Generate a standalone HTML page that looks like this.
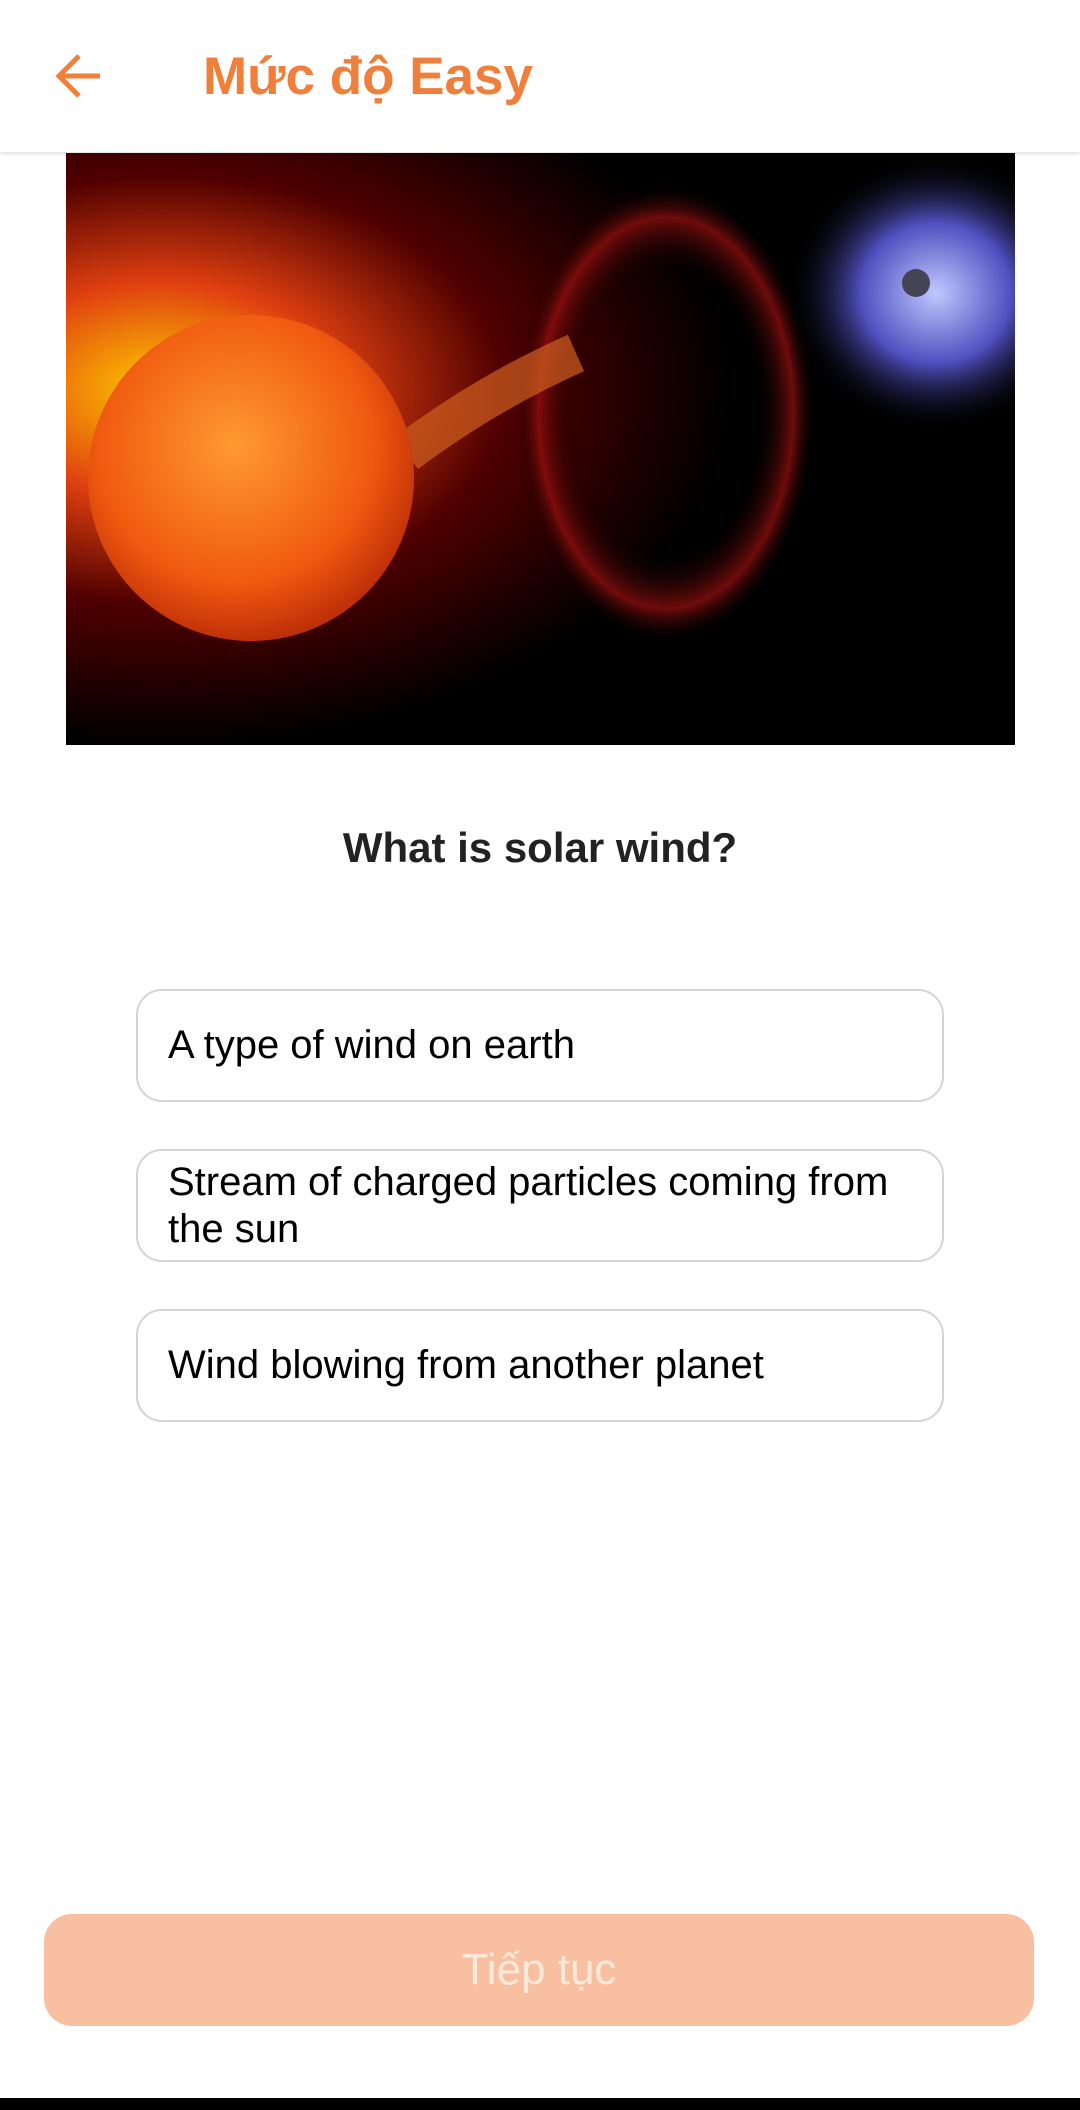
<!DOCTYPE html>
<html><head><meta charset="utf-8"><style>
html,body{margin:0;padding:0;background:#fff;}
body{width:1080px;height:2110px;position:relative;overflow:hidden;font-family:"Liberation Sans",sans-serif;}
.hdr{position:absolute;left:0;top:0;width:1080px;height:152px;background:#fff;box-shadow:0 2px 4px rgba(0,0,0,0.12);z-index:2;}
.title{position:absolute;left:203px;top:46px;font-size:53px;color:#ef7f3a;font-weight:bold;}
.img{position:absolute;left:66px;top:153px;width:949px;height:592px;background:#000;overflow:hidden;}
.q{position:absolute;left:0;width:1080px;top:824px;text-align:center;font-size:42px;font-weight:bold;color:#222;}
.opt{position:absolute;left:136px;width:808px;height:113px;border:2px solid #d4d4d8;border-radius:26px;box-sizing:border-box;font-size:40px;color:#000;padding:0 30px;display:flex;align-items:center;line-height:47px;}
.btn{position:absolute;left:44px;top:1914px;width:990px;height:112px;border-radius:28px;background:#f8c0a0;color:#fde8dc;font-size:44px;text-align:center;line-height:112px;}
.bar{position:absolute;left:0;top:2098px;width:1080px;height:12px;background:#000;}
</style></head><body>
<div class="hdr">
<svg style="position:absolute;left:53px;top:51px" width="50" height="50" viewBox="0 0 50 50"><path d="M47 25H8M26 5L6 25l20 20" fill="none" stroke="#ef7f3a" stroke-width="5"/></svg>
<div class="title">Mức độ Easy</div>
</div>
<div class="img">
<svg width="949" height="592" viewBox="0 0 949 592">
<defs>
<radialGradient id="glow" cx="0.1" cy="0.4" r="0.6"><stop offset="0" stop-color="#ffcc00"/><stop offset="0.3" stop-color="#e04010"/><stop offset="0.6" stop-color="#500000"/><stop offset="1" stop-color="#000"/></radialGradient>
<radialGradient id="sun" cx="0.45" cy="0.4" r="0.6"><stop offset="0" stop-color="#ff9a30"/><stop offset="0.7" stop-color="#f05a10"/><stop offset="1" stop-color="#c03008"/></radialGradient>
<radialGradient id="mag" cx="0.5" cy="0.5" r="0.5"><stop offset="0" stop-color="#c0c8ff"/><stop offset="0.5" stop-color="#5050c0"/><stop offset="1" stop-color="#000" stop-opacity="0"/></radialGradient>
<radialGradient id="red" cx="0.5" cy="0.5" r="0.5"><stop offset="0.6" stop-color="#000" stop-opacity="0"/><stop offset="0.85" stop-color="#a01010" stop-opacity="0.7"/><stop offset="1" stop-color="#000" stop-opacity="0"/></radialGradient>
</defs>
<rect width="949" height="592" fill="url(#glow)"/>
<ellipse cx="600" cy="260" rx="150" ry="230" fill="url(#red)"/>
<ellipse cx="870" cy="140" rx="150" ry="140" fill="url(#mag)"/>
<circle cx="850" cy="130" r="14" fill="#445"/>
<path d="M340 300 Q420 240 510 200" stroke="#d06020" stroke-width="40" fill="none" opacity="0.7"/>
<circle cx="185" cy="325" r="163" fill="url(#sun)"/>
</svg>
</div>
<div class="q">What is solar wind?</div>
<div class="opt" style="top:989px">A type of wind on earth</div>
<div class="opt" style="top:1149px">Stream of charged particles coming from the sun</div>
<div class="opt" style="top:1309px">Wind blowing from another planet</div>
<div class="btn">Tiếp tục</div>
<div class="bar"></div>
</body></html>
